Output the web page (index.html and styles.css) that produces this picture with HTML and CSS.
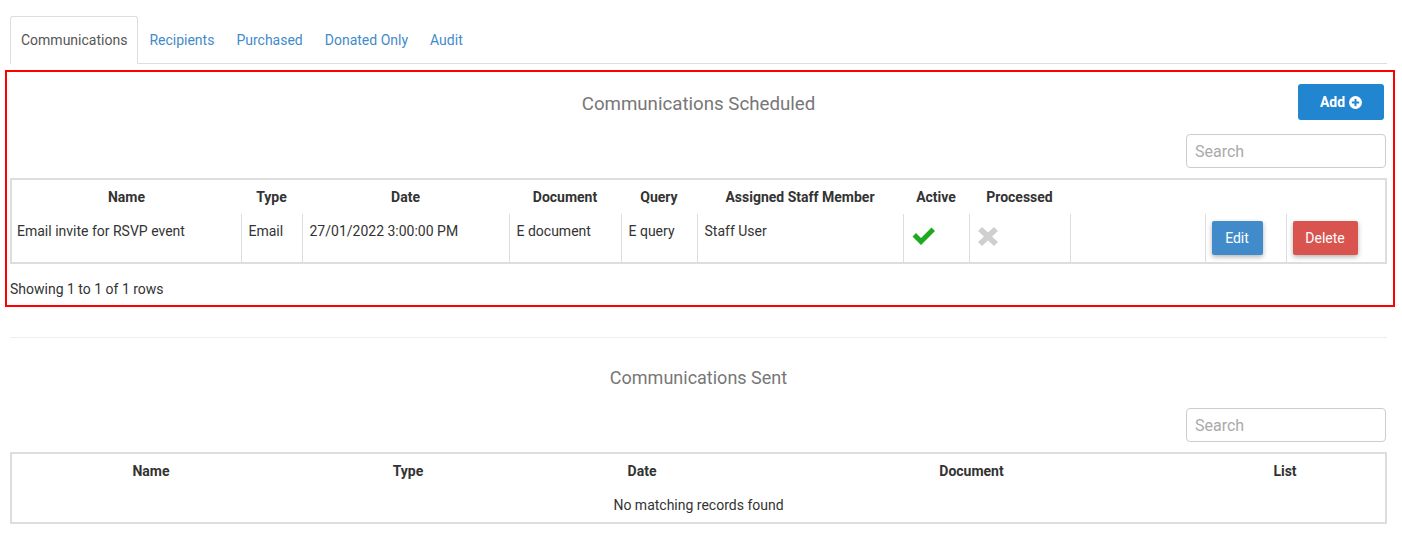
FILE: index.html
```html
<!DOCTYPE html>
<html>
<head>
<meta charset="utf-8">
<link rel="stylesheet" href="styles.css">
</head>
<body>
<div class="page">
  <ul class="tabs">
    <li class="tab active">Communications</li>
    <li class="tab">Recipients</li>
    <li class="tab">Purchased</li>
    <li class="tab">Donated Only</li>
    <li class="tab">Audit</li>
  </ul>

  <section class="scheduled">
    <div class="head">
      <div></div>
      <h2 class="title">Communications Scheduled</h2>
      <div class="head-right">
        <button class="btn-add">Add
          <svg class="plus" viewBox="0 0 16 16" width="13" height="13"><circle cx="8" cy="8" r="8" fill="#fff"/><rect x="6.8" y="3.5" width="2.4" height="9" fill="#2185d0"/><rect x="3.5" y="6.8" width="9" height="2.4" fill="#2185d0"/></svg>
        </button>
      </div>
    </div>
    <div class="search-row"><input class="search" placeholder="Search"></div>
    <table class="grid sched">
      <thead>
        <tr>
          <th class="c-name">Name</th>
          <th class="c-type">Type</th>
          <th class="c-date">Date</th>
          <th class="c-doc">Document</th>
          <th class="c-query">Query</th>
          <th class="c-staff">Assigned Staff Member</th>
          <th class="c-active">Active</th>
          <th class="c-proc">Processed</th>
          <th class="c-blank"></th>
          <th class="c-edit"></th>
          <th class="c-del"></th>
        </tr>
      </thead>
      <tbody>
        <tr>
          <td>Email invite for RSVP event</td>
          <td>Email</td>
          <td>27/01/2022 3:00:00 PM</td>
          <td>E document</td>
          <td>E query</td>
          <td>Staff User</td>
          <td class="icon"><svg width="24" height="18" viewBox="0 0 24 18"><path d="M0.5 9.5 L4 6 L9 11 L19.5 0.5 L23 4 L9 18 Z" fill="#1eaa1e"/></svg></td>
          <td class="icon"><svg width="20" height="19" viewBox="0 0 20 19"><path d="M0 4 L4 0 L10 5.5 L16 0 L20 4 L14 9.5 L20 15 L16 19 L10 13.5 L4 19 L0 15 L6 9.5 Z" fill="#cfcfcf"/></svg></td>
          <td></td>
          <td class="act"><button class="btn-edit">Edit</button></td>
          <td class="act"><button class="btn-del">Delete</button></td>
        </tr>
      </tbody>
    </table>
    <p class="showing">Showing 1 to 1 of 1 rows</p>
  </section>

  <hr class="sep">

  <section class="sent">
    <h2 class="title title-sent">Communications Sent</h2>
    <div class="search-row"><input class="search" placeholder="Search"></div>
    <table class="grid sent-table">
      <thead>
        <tr>
          <th class="s1">Name</th>
          <th class="s2">Type</th>
          <th class="s3">Date</th>
          <th class="s4">Document</th>
          <th class="s5">List</th>
        </tr>
      </thead>
      <tbody>
        <tr><td class="empty" colspan="5">No matching records found</td></tr>
      </tbody>
    </table>
  </section>
</div>
</body>
</html>
```

FILE: styles.css
```css
* { box-sizing: border-box; }
body {
  margin: 0;
  font-family: Roboto, "Liberation Sans", Arial, sans-serif;
  font-size: 14px;
  color: #333;
  background: #fff;
}
.page {
  padding: 16px 15px 0 10px;
}
.tabs {
  list-style: none;
  margin: 0;
  padding: 0;
  display: flex;
  border-bottom: 1px solid #ddd;
  height: 48px;
}
.tab {
  height: 48px;
  padding: 0 10px;
  margin-right: 0;
  display: flex;
  align-items: center;
  color: #428bca;
  border: 1px solid transparent;
  border-radius: 3px 3px 0 0;
}
.tab.active {
  color: #555;
  border-color: #ddd;
  border-bottom-color: #fff;
  background: #fff;
}
.scheduled {
  margin: 6px -8px 0 -5px;
  border: 2px solid #f00;
  padding: 0 6px 0 3px;
  height: 237px;
}
.head {
  display: grid;
  grid-template-columns: 1fr auto 1fr;
  align-items: start;
  padding-top: 12px;
}
.title {
  margin: 0;
  font-weight: 400;
  font-size: 18.7px;
  color: #777;
  text-align: center;
  line-height: 22px;
  padding-top: 9px;
}
.head-right {
  display: flex;
  justify-content: flex-end;
  padding-right: 3px;
}
.btn-add {
  width: 86px;
  height: 36px;
  border: 0;
  border-radius: 3px;
  background: #2185d0;
  color: #fff;
  font-family: inherit;
  font-weight: 700;
  font-size: 14px;
  display: flex;
  align-items: center;
  justify-content: center;
  gap: 4px;
  padding: 0;
}
.plus { display: block; }
.search-row {
  display: flex;
  justify-content: flex-end;
  padding-right: 1px;
  margin-top: 14px;
}
.search {
  width: 200px;
  height: 34px;
  border: 1px solid #ccc;
  border-radius: 4px;
  padding: 0 8px;
  font-family: inherit;
  font-size: 16px;
  color: #555;
  outline: none;
}
.search::placeholder { color: #aaa; }
.grid {
  width: 100%;
  border-collapse: collapse;
  border: 2px solid #ddd;
  margin-top: 10px;
  table-layout: fixed;
}
.grid th {
  font-weight: 700;
  text-align: center;
  height: 35px;
  padding: 0;
  color: #333;
}
.sched td {
  border-left: 1px solid #ddd;
  vertical-align: top;
  padding: 9px 7px 0;
  height: 49px;
  line-height: 16px;
}
.sched td:first-child { border-left: 0; padding-left: 5px; }
.sched td.icon { padding-top: 13px; padding-left: 8px; }
.sched td.icon svg { display: block; }
.sched td.act { padding: 7px 0 0 6px; }
.c-name { width: 230px; }
.c-type { width: 61px; }
.c-date { width: 207px; }
.c-doc { width: 112px; }
.c-query { width: 76px; }
.c-staff { width: 206px; }
.c-active { width: 66px; }
.c-proc { width: 101px; }
.c-blank { width: 135px; }
.c-edit { width: 81px; }
.c-del { width: auto; }
.btn-edit, .btn-del {
  height: 34px;
  border: 0;
  border-radius: 2px;
  color: #fff;
  font-family: inherit;
  font-size: 14px;
  box-shadow: 0 2px 5px rgba(0,0,0,0.3);
  padding: 0;
}
.btn-edit { width: 51px; background: #428bca; }
.btn-del { width: 65px; background: #d9534f; }
.showing {
  margin: 17px 0 0 0;
  line-height: 16px;
  color: #333;
}
.sep {
  border: 0;
  border-top: 1px solid #eee;
  margin: 30px 0 0;
}
.sent .title { padding-top: 29px; font-size: 18px; }
.sent .search-row { margin-top: 19px; }
.sent-table td.empty {
  text-align: center;
  vertical-align: middle;
  padding: 0;
  height: 35px;
  line-height: 16px;
}
.s1 { width: 279px; }
.s2 { width: 236px; }
.s3 { width: 232px; }
.s4 { width: 427px; }
.s5 { width: auto; }
```
